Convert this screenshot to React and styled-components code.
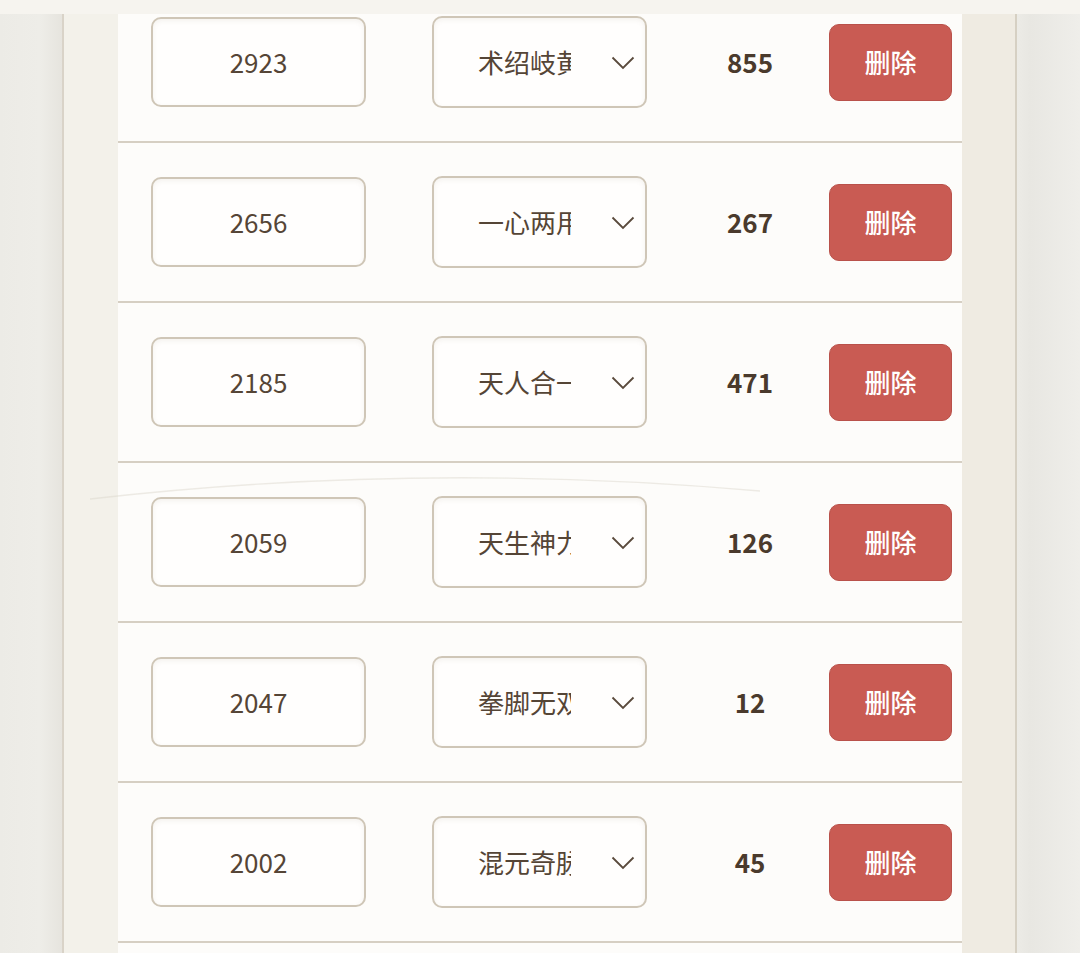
import styled, { createGlobalStyle } from "styled-components";

const GlobalStyle = createGlobalStyle`
  html, body {
    margin: 0;
    padding: 0;
    height: 100%;
    overflow: hidden;
    background: #ecebe6;
    font-family: "Noto Sans CJK SC", "Noto Sans", sans-serif;
  }
`;

const TopBar = styled.div`
  position: fixed;
  top: 0;
  left: 0;
  right: 0;
  height: 14px;
  background: #f6f4ef;
  z-index: 5;
`;

const Page = styled.div`
  min-height: 953px;
  background: linear-gradient(
    90deg,
    #ecebe6 0px,
    #eeede8 40px,
    #e6e4de 62px,
    #ecebe6 62px,
    #ecebe6 1017px,
    #e8e7e2 1030px,
    #efeeea 1080px
  );
`;

const Card = styled.section`
  position: relative;
  margin-left: 62px;
  width: 955px;
  min-height: 953px;
  padding: 0 53px 0 54px;
  box-sizing: border-box;
  border-left: 2px solid #d9d3c8;
  border-right: 2px solid #d6d0c3;
  background: linear-gradient(
    90deg,
    #f3f1ea 0px,
    #f3f1ea 898px,
    #efebe2 898px,
    #efebe2 100%
  );
`;

const Table = styled.div`
  position: relative;
  margin-top: -17px;
  background: #fdfcfa;
  display: flex;
  flex-direction: column;
`;

const Row = styled.div`
  display: grid;
  grid-template-columns: 281px 215px 1fr 123px;
  align-items: center;
  height: 158px;
  padding: 0 10px 0 33px;
  border-bottom: 2px solid #d6cfc3;
`;

const Field = styled.div`
  width: 215px;
  height: 90px;
  box-sizing: border-box;
  border: 2px solid #cfc6b7;
  border-radius: 10px;
  background: #fffefd;
  box-shadow: inset 0 2px 5px rgba(120, 100, 70, 0.08);
  display: flex;
  align-items: center;
  justify-content: center;
  padding-bottom: 1px;
  font-size: 26px;
  color: #554536;
`;

const SelectBox = styled(Field)`
  height: 92px;
  justify-content: flex-start;
  padding-left: 44px;
  padding-right: 10px;
`;

const SelectText = styled.span`
  width: 93px;
  overflow: hidden;
  white-space: nowrap;
`;

const Chevron = styled.svg`
  margin-left: auto;
  margin-top: 2px;
  width: 24px;
  height: 14px;
`;

const Count = styled.div`
  padding-left: 24px;
  padding-bottom: 1px;
  text-align: center;
  font-size: 26px;
  font-weight: 700;
  color: #4a3a2c;
`;

const DeleteButton = styled.button`
  width: 123px;
  height: 77px;
  border: 1px solid #b9514a;
  border-radius: 10px;
  background: #c95b53;
  color: #fff;
  font-family: inherit;
  font-size: 26px;
  font-weight: 500;
  padding: 0 0 1px;
  cursor: pointer;
`;

const Decoration = styled.svg`
  position: absolute;
  left: -64px;
  top: 0;
  width: 1080px;
  height: 953px;
  pointer-events: none;
`;

const rows = [
  { id: "2923", name: "术绍岐黄", count: 855 },
  { id: "2656", name: "一心两用", count: 267 },
  { id: "2185", name: "天人合一", count: 471 },
  { id: "2059", name: "天生神力", count: 126 },
  { id: "2047", name: "拳脚无双", count: 12 },
  { id: "2002", name: "混元奇脉", count: 45 },
  { id: "1988", name: "金刚不坏", count: 30 },
];

function App() {
  return (
    <>
      <GlobalStyle />
      <TopBar />
      <Page>
        <Card>
          <Table>
            {rows.map((r) => (
              <Row key={r.id}>
                <Field>{r.id}</Field>
                <SelectBox>
                  <SelectText>{r.name}</SelectText>
                  <Chevron viewBox="0 0 24 14">
                    <polyline
                      points="1.5,1.5 12,12 22.5,1.5"
                      fill="none"
                      stroke="#5a4a3c"
                      strokeWidth="1.8"
                    />
                  </Chevron>
                </SelectBox>
                <Count>{r.count}</Count>
                <DeleteButton>删除</DeleteButton>
              </Row>
            ))}
          </Table>
          <Decoration viewBox="0 0 1080 953">
            <path
              d="M90 516 Q 420 478 760 508"
              fill="none"
              stroke="#d9d4ca"
              strokeWidth="1.4"
              opacity="0.45"
            />
          </Decoration>
        </Card>
      </Page>
    </>
  );
}

export default App;
